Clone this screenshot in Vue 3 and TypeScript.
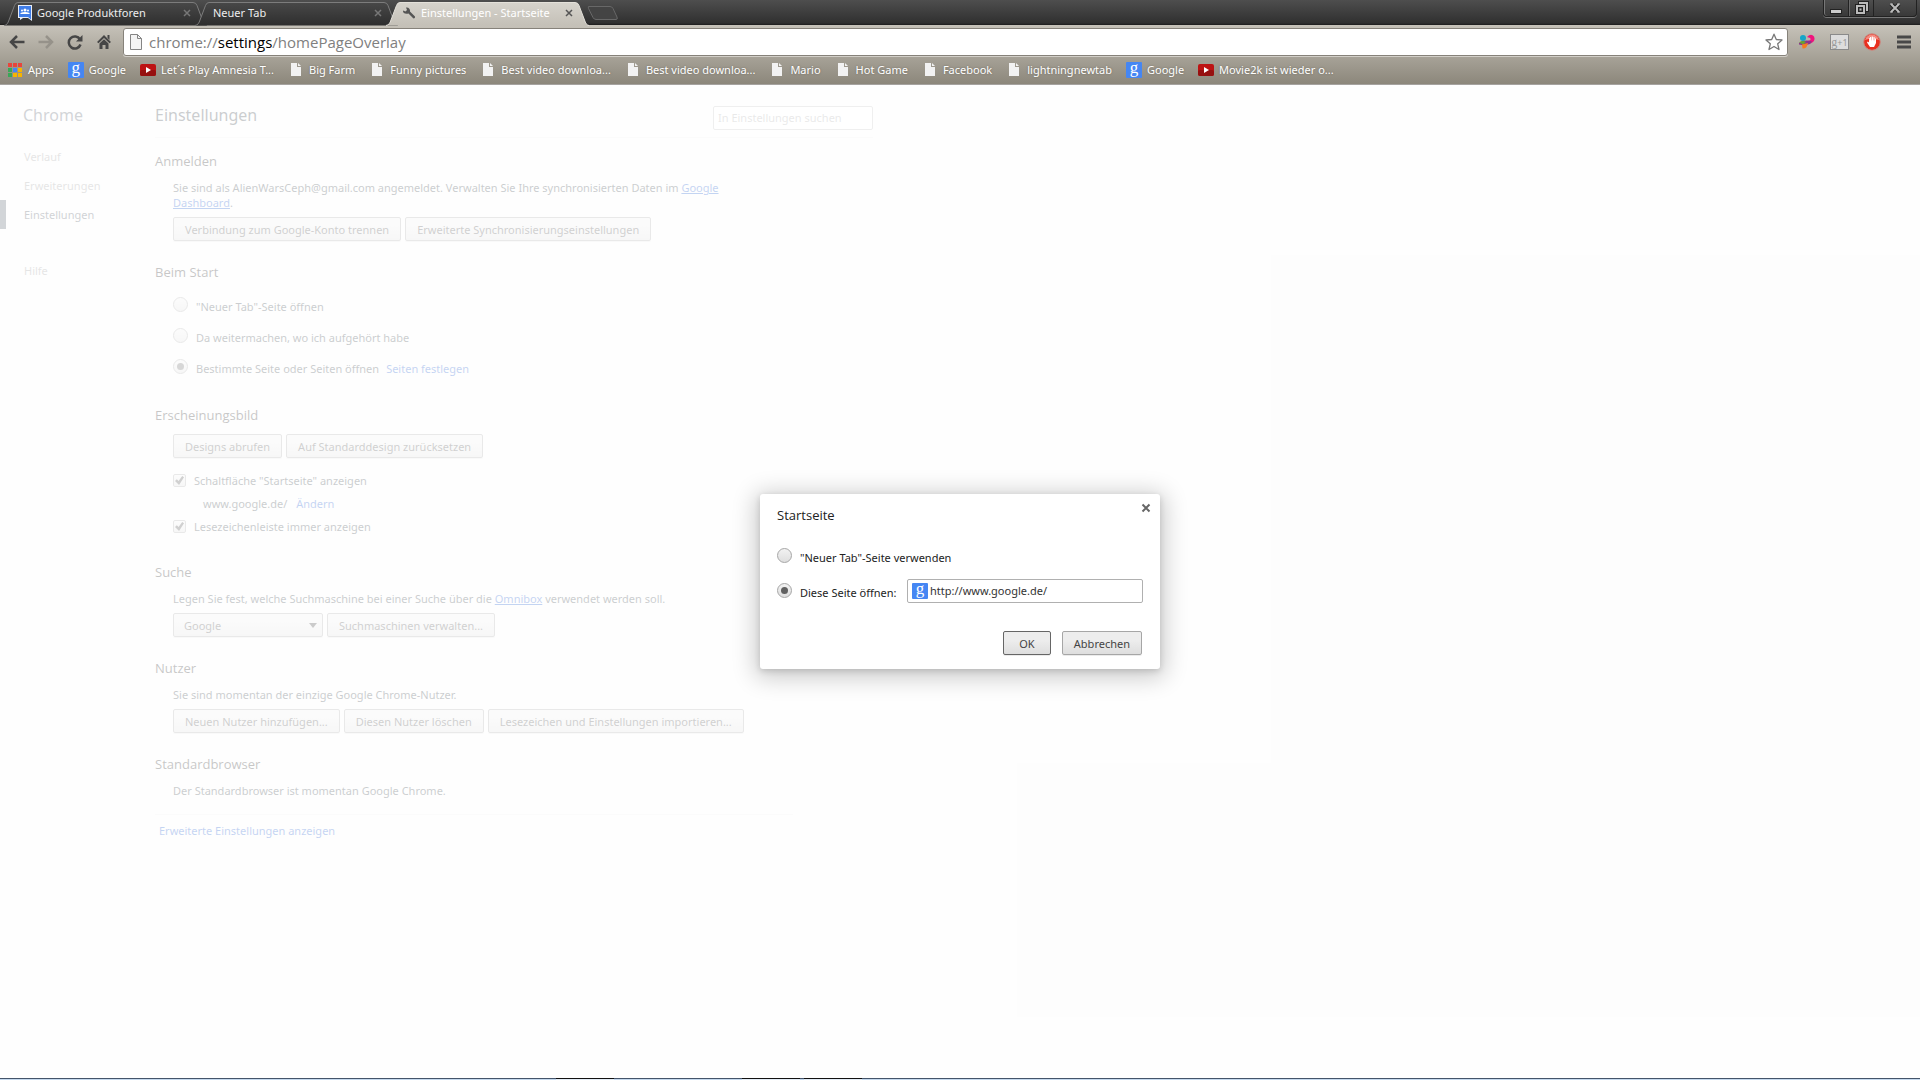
<script setup lang="ts">
import { ref } from 'vue'

type Icon = 'page' | 'google' | 'video' | 'apps'
interface Bookmark { label: string; icon: Icon }

const bookmarks: Bookmark[] = [
  { label: 'Apps', icon: 'apps' },
  { label: 'Google', icon: 'google' },
  { label: 'Let´s Play Amnesia T...', icon: 'video' },
  { label: 'Big Farm', icon: 'page' },
  { label: 'Funny pictures', icon: 'page' },
  { label: 'Best video downloa...', icon: 'page' },
  { label: 'Best video downloa...', icon: 'page' },
  { label: 'Mario', icon: 'page' },
  { label: 'Hot Game', icon: 'page' },
  { label: 'Facebook', icon: 'page' },
  { label: 'lightningnewtab', icon: 'page' },
  { label: 'Google', icon: 'google' },
  { label: 'Movie2k ist wieder o...', icon: 'video' },
]

const tabs = [
  { title: 'Google Produktforen', icon: 'forum', active: false },
  { title: 'Neuer Tab', icon: '', active: false },
  { title: 'Einstellungen - Startseite', icon: 'wrench', active: true },
]

const appColors = ['#e8453c', '#e8453c', '#e8453c', '#3aa757', '#4587f4', '#f6b400', '#3aa757', '#f6b400', '#f6b400']

const startup = ref('pages')
const showHome = ref(true)
const showBookmarks = ref(true)
const engine = ref('Google')
const homeChoice = ref('url')
const homeUrl = ref('http://www.google.de/')
</script>

<template>
  <div class="window">
    <header class="titlebar">
      <div class="tabs">
        <div v-for="t in tabs" :key="t.title" class="tab" :class="{ active: t.active }">
          <svg class="tab-shape" viewBox="0 0 203 24" width="203" height="24" aria-hidden="true">
            <defs>
              <linearGradient id="tab-dark" x1="0" y1="0" x2="0" y2="1">
                <stop offset="0" stop-color="#484848" /><stop offset="1" stop-color="#2e2e2e" />
              </linearGradient>
              <linearGradient id="tab-light" x1="0" y1="0" x2="0" y2="1">
                <stop offset="0" stop-color="#d6d3cc" /><stop offset="1" stop-color="#c4c0b7" />
              </linearGradient>
            </defs>
            <path
              d="M0 24.5C3 24 4 22 5 19L10.500 4.500Q11.500 1.500 14 1.500H189Q192 1.500 193 4.500L198.500 19C199.500 22 200.500 24 203 24.500"
              :fill="t.active ? 'url(#tab-light)' : 'url(#tab-dark)'"
              :stroke="t.active ? '#e4e1da' : '#7c7c7c'"
            />
          </svg>
          <svg v-if="t.icon === 'forum'" class="tab-icon" viewBox="0 0 14 16" width="14" height="16">
            <path d="M0 0H14V16L10 13H5L2 15V13H0Z" fill="#e9eef8" />
            <path d="M1 1H13V14.500L10 12H1Z" fill="#3f7de8" />
            <circle cx="7" cy="5" r="1.500" fill="#fff" /><circle cx="4" cy="5.500" r="1" fill="#fff" /><circle cx="10" cy="5.500" r="1" fill="#fff" />
            <path d="M2.500 9V8Q7 6 11.500 8V9Z" fill="#fff" />
          </svg>
          <svg v-if="t.icon === 'wrench'" class="tab-icon" viewBox="0 0 14 14" width="14" height="14">
            <path d="M1 4.500 3.500 5.500 5 4 4 1.500C6.500 1 8.500 3 8 5.500L13 10.500Q13.500 12.500 11.500 12.500L6.500 7.500C3.500 8.500.500 7 1 4.500Z" fill="#555" />
          </svg>
          <span class="tab-title">{{ t.title }}</span>
          <button class="tab-close" aria-label="Tab schließen">
            <svg viewBox="0 0 8 8" width="8" height="8"><path d="M1 1 7 7M7 1 1 7" stroke="currentColor" stroke-width="1.500" /></svg>
          </button>
        </div>
        <button class="new-tab" aria-label="Neuer Tab">
          <svg viewBox="0 0 32 16" width="32" height="16">
            <path d="M1.500 1.500H23Q25 1.500 26 3.500L30 12Q31 14.500 29 14.500H9Q7 14.500 6 12.500L1.500 3.500Q1 1.500 1.500 1.500Z" fill="#444" stroke="#686868" />
          </svg>
        </button>
      </div>
      <div class="win-buttons">
        <button aria-label="Minimieren">
          <svg viewBox="0 0 14 14" width="14" height="14"><rect x="1.500" y="8.500" width="11" height="4" fill="#ccc" stroke="#222" /></svg>
        </button>
        <button aria-label="Wiederherstellen">
          <svg viewBox="0 0 14 14" width="14" height="14" fill="none">
            <rect x="5" y="2" width="7" height="7" stroke="#222" stroke-width="4" /><rect x="5" y="2" width="7" height="7" stroke="#bbb" stroke-width="2" />
            <rect x="2" y="5" width="7" height="7" fill="#333" stroke="#222" stroke-width="4" /><rect x="2" y="5" width="7" height="7" stroke="#bbb" stroke-width="2" />
            <rect x="4.500" y="7.500" width="2" height="2" fill="#bbb" />
          </svg>
        </button>
        <button class="wide" aria-label="Schließen">
          <svg viewBox="0 0 14 14" width="14" height="14" fill="none">
            <path d="M3 3 11 11M11 3 3 11" stroke="#222" stroke-width="4" /><path d="M3 3 11 11M11 3 3 11" stroke="#bbb" stroke-width="2" />
            <path d="M2 3H5M9 3H12M2 11H5M9 11H12" stroke="#bbb" />
          </svg>
        </button>
      </div>
    </header>

    <div class="chrome-bars">
      <div class="toolbar">
        <div class="nav-buttons">
          <button aria-label="Zurück">
            <svg viewBox="0 0 16 16" width="16" height="16"><path d="M8 2 2 8 8 14M2.500 8H15.500" fill="none" stroke="#464646" stroke-width="2.500" /></svg>
          </button>
          <button aria-label="Vorwärts">
            <svg viewBox="0 0 16 16" width="16" height="16"><path d="M8 2 14 8 8 14M13.500 8H.500" fill="none" stroke="#96928a" stroke-width="2.500" /></svg>
          </button>
          <button aria-label="Neu laden">
            <svg viewBox="0 0 16 16" width="16" height="16">
              <path d="M13 5.500A6 6 0 1 0 13.500 10.500" fill="none" stroke="#464646" stroke-width="2.500" /><path d="M15.500 1V7.500H9Z" fill="#464646" />
            </svg>
          </button>
          <button aria-label="Startseite">
            <svg viewBox="0 0 16 16" width="16" height="16">
              <path d="M8 1 15 8 13.500 9.300 8 4 2.500 9.300 1 8Z" fill="#464646" /><path d="M11.500 1H13.500V6L11.500 4Z" fill="#464646" />
              <path d="M3.500 9.500 8 5.200 12.500 9.500V15H9.500V11H6.500V15H3.500Z" fill="#464646" />
            </svg>
          </button>
        </div>
        <div class="omnibox">
          <svg viewBox="0 0 12 16" width="12" height="16">
            <path d="M.500.500H7.500L11.500 4.500V15.500H.500Z" fill="#f4f4f4" stroke="#858585" /><path d="M7.500.500V4.500H11.500" fill="none" stroke="#858585" />
          </svg>
          <span class="url">chrome://<b>settings</b>/homePageOverlay</span>
          <button aria-label="Lesezeichen hinzufügen">
            <svg viewBox="0 0 18 18" width="18" height="18">
              <path d="M9 1.200 11.300 6.500 17 7 12.700 10.800 14 16.500 9 13.500 4 16.500 5.300 10.800 1 7 6.700 6.500Z" fill="#fff" stroke="#777" stroke-width="1.300" stroke-linejoin="round" />
            </svg>
          </button>
        </div>
        <div class="extensions">
          <button aria-label="Erweiterung">
            <svg viewBox="0 0 18 16" width="18" height="16">
              <circle cx="5" cy="4" r="3" fill="#15a5c8" /><path d="M9 3Q13-1 16 2.500 18 7 12.500 9.500L10 7Q14 6 12 4Z" fill="#f0147d" />
              <path d="M1 9Q7 5 14 7.500L12 10Q7 12 1 10.500Z" fill="#8c358c" /><path d="M1 8.500Q5 6 8 8L5 10.500Z" fill="#66a332" /><path d="M4 10.500 10 9Q9 15 4.500 14.500Z" fill="#f47b20" />
            </svg>
          </button>
          <button class="plus-one" aria-label="Google +1"><i>g</i>+1</button>
          <button aria-label="Adblock">
            <svg viewBox="0 0 18 18" width="18" height="18">
              <circle cx="9" cy="9" r="8.300" fill="#e8301f" stroke="#c98a82" /><path d="M2 7Q4 1.500 9 1.500T16 7Q9 4.500 2 7Z" fill="#f48b80" />
              <path d="M6 5V9.500L4.800 8.500 4 9.500 7 14H11L13 10V5.500H12V8.500L11.500 4H10.500V8L9.800 3.500H8.700V8L8 4H7V8.500L6.800 5Z" fill="#fff" />
            </svg>
          </button>
          <button aria-label="Menü">
            <svg viewBox="0 0 14 14" width="14" height="14"><path d="M0 2H14M0 7H14M0 12H14" stroke="#484848" stroke-width="3" /></svg>
          </button>
        </div>
      </div>
      <nav class="bookmarks">
        <a v-for="(b, i) in bookmarks" :key="i" href="#">
          <span class="bm-icon">
            <svg v-if="b.icon === 'apps'" viewBox="0 0 14 14" width="14" height="14">
              <rect v-for="(c, n) in appColors" :key="n" :x="(n % 3) * 5" :y="Math.floor(n / 3) * 5" width="4" height="4" :fill="c" />
            </svg>
            <i v-else-if="b.icon === 'google'" class="g-logo">g</i>
            <svg v-else-if="b.icon === 'video'" viewBox="0 0 16 12" width="16" height="12">
              <rect width="16" height="12" rx="2" fill="#bd1313" /><rect y="6" width="16" height="6" rx="2" fill="#961010" /><path d="M6 3V9L11 6Z" fill="#fff" />
            </svg>
            <svg v-else viewBox="0 0 10 13" width="10" height="13"><path d="M0 0H6V4H10V13H0Z" fill="#f2f2f2" /><path d="M7 0 10 3H7Z" fill="#f2f2f2" /></svg>
          </span>
          {{ b.label }}
        </a>
      </nav>
    </div>

    <main class="content">
      <aside class="side">
        <h1>Chrome</h1>
        <a href="#">Verlauf</a>
        <a href="#">Erweiterungen</a>
        <a href="#" class="current">Einstellungen</a>
        <a href="#" class="help">Hilfe</a>
      </aside>

      <div class="settings">
        <div class="page-head">
          <h1>Einstellungen</h1>
          <input type="search" placeholder="In Einstellungen suchen" aria-label="In Einstellungen suchen" />
        </div>

        <section>
          <h2>Anmelden</h2>
          <p>Sie sind als AlienWarsCeph@gmail.com angemeldet. Verwalten Sie Ihre synchronisierten Daten im <a href="#" class="underlined">Google Dashboard</a>.</p>
          <div class="row">
            <button class="btn">Verbindung zum Google-Konto trennen</button>
            <button class="btn">Erweiterte Synchronisierungseinstellungen</button>
          </div>
        </section>

        <section>
          <h2>Beim Start</h2>
          <div class="option"><label><input v-model="startup" type="radio" name="startup" value="newtab" />"Neuer Tab"-Seite öffnen</label></div>
          <div class="option"><label><input v-model="startup" type="radio" name="startup" value="continue" />Da weitermachen, wo ich aufgehört habe</label></div>
          <div class="option"><label><input v-model="startup" type="radio" name="startup" value="pages" />Bestimmte Seite oder Seiten öffnen</label><a href="#">Seiten festlegen</a></div>
        </section>

        <section class="appearance">
          <h2>Erscheinungsbild</h2>
          <div class="row">
            <button class="btn">Designs abrufen</button>
            <button class="btn">Auf Standarddesign zurücksetzen</button>
          </div>
          <div class="checks">
            <label><input v-model="showHome" type="checkbox" />Schaltfläche "Startseite" anzeigen</label>
            <div class="home-url">www.google.de/ <a href="#">Ändern</a></div>
            <label><input v-model="showBookmarks" type="checkbox" />Lesezeichenleiste immer anzeigen</label>
          </div>
        </section>

        <section>
          <h2>Suche</h2>
          <p>Legen Sie fest, welche Suchmaschine bei einer Suche über die <a href="#" class="underlined">Omnibox</a> verwendet werden soll.</p>
          <div class="row">
            <div class="select">
              <select v-model="engine" class="btn" aria-label="Suchmaschine"><option>Google</option></select>
            </div>
            <button class="btn">Suchmaschinen verwalten...</button>
          </div>
        </section>

        <section>
          <h2>Nutzer</h2>
          <p>Sie sind momentan der einzige Google Chrome-Nutzer.</p>
          <div class="row">
            <button class="btn">Neuen Nutzer hinzufügen...</button>
            <button class="btn">Diesen Nutzer löschen</button>
            <button class="btn">Lesezeichen und Einstellungen importieren...</button>
          </div>
        </section>

        <section>
          <h2>Standardbrowser</h2>
          <p>Der Standardbrowser ist momentan Google Chrome.</p>
        </section>

        <div class="page-foot"><a href="#">Erweiterte Einstellungen anzeigen</a></div>
      </div>

      <div class="overlay">
        <form class="dialog" role="dialog" aria-labelledby="dialog-title" @submit.prevent>
          <button type="button" class="dialog-close" aria-label="Schließen">
            <svg viewBox="0 0 10 10" width="10" height="10"><path d="M1.500 1.500 8.500 8.500M8.500 1.500 1.500 8.500" stroke="#666" stroke-width="2" /></svg>
          </button>
          <h2 id="dialog-title">Startseite</h2>
          <div class="choice"><label><input v-model="homeChoice" type="radio" name="home" value="newtab" />"Neuer Tab"-Seite verwenden</label></div>
          <div class="choice">
            <label><input v-model="homeChoice" type="radio" name="home" value="url" />Diese Seite öffnen:</label>
            <div class="url-field">
              <i class="g-logo">g</i>
              <input v-model="homeUrl" type="text" aria-label="Diese Seite öffnen" />
            </div>
          </div>
          <div class="actions">
            <button class="btn default">OK</button>
            <button type="button" class="btn">Abbrechen</button>
          </div>
        </form>
      </div>
    </main>

    <footer class="taskbar-edge"><span class="first"></span><span class="second"></span><span></span></footer>
  </div>
</template>

<style>
body { margin: 0; background: #fff; }
</style>

<style scoped>
.window {
  display: flex;
  flex-direction: column;
  min-height: 100vh;
  font: 11px/15px "Noto Sans", "Open Sans", sans-serif;
  color: #303942;
}
.window *, .window *::before { box-sizing: border-box; }
button, input, select { font: inherit; color: inherit; }
button { padding: 0; border: 0; background: none; }
h1, h2, p { margin: 0; font-weight: 400; }
svg { display: block; flex: none; }

/* Title bar and tabs */
.titlebar {
  display: flex;
  justify-content: space-between;
  height: 25px;
  background: linear-gradient(#4e4e4e, #303030 92%, #1c1c1c);
}
.tabs { display: flex; align-items: flex-end; padding-left: 4px; }
.tab {
  position: relative;
  display: flex;
  align-items: center;
  gap: 5px;
  width: 203px;
  height: 24px;
  margin-right: -12px;
  padding: 0 16px 0 14px;
  color: #eee;
  z-index: 1;
}
.tab.active { z-index: 2; color: #fff; padding-left: 16px; }
.tab-shape { position: absolute; left: 0; top: 0; overflow: visible; }
.tab-icon, .tab-title, .tab-close { position: relative; }
.tab-title { flex: 1; padding-bottom: 1px; white-space: nowrap; }
.tab:nth-child(2) .tab-title { padding-left: 4px; }
.tab-close { color: #777; }
.active .tab-close { color: #555; }
.new-tab { align-self: center; margin-left: 10px; }
.win-buttons {
  display: flex;
  height: 17px;
  margin-right: 3px;
  border: 1px solid #222;
  border-top: 0;
  border-radius: 0 0 4px 4px;
  box-shadow: 0 1px 0 #777, inset 1px 0 0 #777;
}
.win-buttons button { display: grid; place-items: center; width: 25px; border-right: 1px solid #222; }
.win-buttons .wide { width: 42px; border: 0; }
.win-buttons button + button { border-left: 1px solid #6a6a6a; }

/* Toolbar and bookmarks */
.chrome-bars {
  height: 60px;
  border-bottom: 1px solid #a6a3a0;
  background: linear-gradient(#c6c2b9, #8c877b);
}
.toolbar { display: flex; align-items: center; height: 34px; padding-right: 9px; }
.nav-buttons { display: flex; gap: 13px; padding: 0 11px 0 9px; }
.omnibox {
  display: flex;
  flex: 1;
  align-items: center;
  gap: 7px;
  height: 28px;
  padding: 0 4px 0 6px;
  border: 1px solid #86827a;
  border-radius: 3px;
  background: #fff;
  box-shadow: 0 1px 0 #d2cfc8;
}
.url { flex: 1; font: 15px/24px "Open Sans", sans-serif; color: #808080; }
.url b { font-weight: 400; color: #000; }
.extensions { display: flex; align-items: center; gap: 14px; padding-left: 10px; }
.extensions button:last-child { margin-left: 2px; }
.plus-one {
  width: 19px;
  height: 16px;
  border: 1px solid #8a8a8a;
  background: #ddd;
  color: #999;
  font-size: 9px;
  line-height: 13px;
  white-space: nowrap;
}
.plus-one i { font: 12px/12px "Liberation Serif", serif; }
.bookmarks { display: flex; gap: 14px; height: 21px; padding-left: 7px; align-items: center; }
.bookmarks a {
  display: flex;
  align-items: center;
  gap: 5px;
  color: #fff;
  text-decoration: none;
  text-shadow: 0 0 2px #6b665c;
  white-space: nowrap;
}
.bm-icon { display: grid; place-items: center; width: 16px; height: 16px; }
.g-logo {
  display: block;
  flex: none;
  width: 16px;
  height: 16px;
  border-radius: 1px;
  background: #4586f3;
  color: #fff;
  font: 17px/12px "Liberation Serif", serif;
  text-align: center;
  text-shadow: none;
}

/* Settings page */
.content { position: relative; display: flex; flex: 1; background: #f9f9f9; }
.side { width: 155px; padding-top: 20px; }
h1 { font-size: 16px; line-height: 20px; }
.side h1 { margin-bottom: 17px; padding-left: 23px; color: #4e5764; }
.side a { display: block; padding-left: 24px; line-height: 29px; color: #999; text-decoration: none; }
.side a.current { padding-left: 18px; border-left: 6px solid #4e5764; color: #464e5a; }
.side a.help { margin-top: 27px; }
.settings { flex: 1; max-width: 718px; }
.page-head {
  display: flex;
  justify-content: space-between;
  height: 53px;
  margin-bottom: 14px;
  padding-top: 20px;
  border-bottom: 1px solid #eee;
}
.page-head input {
  width: 160px;
  height: 24px;
  margin-top: 1px;
  padding: 0 4px 2px;
  border: 1px solid #bfbfbf;
  border-radius: 2px;
  background: #fff;
}
.page-head input::placeholder { color: #a9a9a9; }
section { padding: 0 0 22px 18px; }
h2 { font: 13px/18px "Open Sans", sans-serif; color: #222; }
section h2 { margin: 0 0 10px -18px; }
p { max-width: 590px; }
p + .row { margin-top: 7px; }
.settings a { color: #15c; text-decoration: none; }
.settings a.underlined { text-decoration: underline; }
.row { display: flex; gap: 4px; }
.btn {
  height: 24px;
  padding: 0 11px;
  border: 1px solid #a6a6a6;
  border-radius: 2px;
  background: linear-gradient(#ededed 38%, #dedede);
  box-shadow: 0 1px 0 rgba(0, 0, 0, 0.08);
  color: #444;
  white-space: nowrap;
}
.option { display: flex; align-items: center; gap: 7px; height: 31px; }
label { display: flex; align-items: center; }
input[type="radio"], input[type="checkbox"] {
  appearance: none;
  display: grid;
  place-items: center;
  flex: none;
  margin: 0;
  border: 1px solid #a6a6a6;
  background: linear-gradient(#f2f2f2, #dedede);
}
input[type="radio"] { width: 15px; height: 15px; margin: 0 8px 4px 0; border-radius: 50%; }
input[type="radio"]:checked::before { content: ""; width: 7px; height: 7px; border-radius: 50%; background: #606060; }
input[type="checkbox"] { width: 13px; height: 13px; margin-right: 8px; border-radius: 2px; }
input[type="checkbox"]:checked::before {
  content: "";
  width: 9px;
  height: 9px;
  background: #444;
  clip-path: polygon(0 55%, 20% 35%, 40% 55%, 80% 0, 100% 15%, 45% 100%);
}
.appearance { padding-bottom: 25px; }
.checks { padding-top: 11px; }
.checks label, .home-url { height: 23px; line-height: 23px; }
.home-url { padding-left: 30px; }
.home-url a { margin-left: 6px; }
.select { position: relative; width: 150px; }
.select select { appearance: none; width: 100%; padding: 0 10px; }
.select::after {
  content: "";
  position: absolute;
  right: 6px;
  top: 10px;
  border: 4px solid transparent;
  border-top: 5px solid #333;
  border-bottom: 0;
}
.page-foot { width: 638px; margin-top: -6px; padding: 8px 4px; border-top: 1px solid #eee; }

/* Home page dialog */
.overlay {
  position: absolute;
  inset: 0;
  display: grid;
  place-items: center;
  background: rgba(255, 255, 255, 0.75);
}
.dialog {
  position: relative;
  width: 400px;
  padding: 12px 17px 14px;
  border-radius: 3px;
  background: #fff;
  box-shadow: 0 4px 23px 5px rgba(0, 0, 0, 0.2), 0 2px 6px rgba(0, 0, 0, 0.15);
}
.dialog-close { position: absolute; right: 9px; top: 9px; }
.dialog h2 { margin-bottom: 16px; }
.choice { display: flex; align-items: center; justify-content: space-between; height: 35px; color: #222; }
.url-field {
  display: flex;
  align-items: center;
  gap: 2px;
  width: 236px;
  height: 24px;
  margin-bottom: 4px;
  padding-left: 4px;
  border: 1px solid #b0b0b0;
  border-radius: 2px;
}
.url-field input { flex: 1; min-width: 0; padding: 0; border: 0; outline: 0; background: none; color: #333; }
.actions { display: flex; justify-content: flex-end; gap: 11px; padding: 21px 1px 0 0; }
.actions .btn { min-width: 48px; }
.actions .default { border-color: #666; }

/* Sliver of the taskbar at the screen's bottom edge */
.taskbar-edge {
  display: flex;
  gap: 4px;
  height: 2px;
  padding-left: 556px;
  border-top: 1px solid #44546a;
  background: #c5d9ee;
}
.taskbar-edge span { width: 58px; height: 2px; margin-top: -1px; border-top: 1px solid #111; background: #e4edf6; }
.taskbar-edge .first { margin-right: 124px; }
</style>
